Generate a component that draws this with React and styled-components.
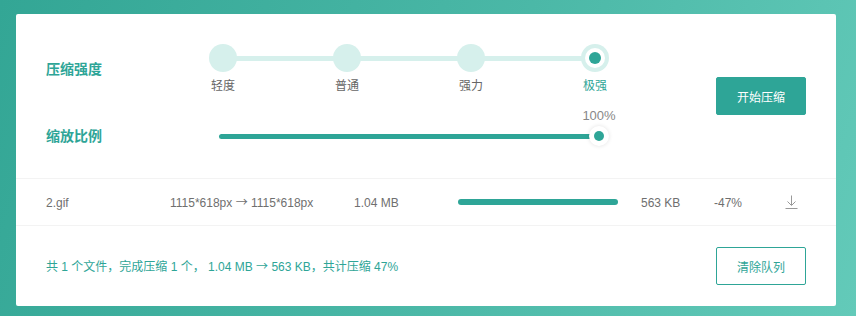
import React from "react";
import styled, { createGlobalStyle } from "styled-components";

const Global = createGlobalStyle`
  html, body { margin: 0; padding: 0; }
  body {
    font-family: "Liberation Sans", "Noto Sans CJK SC", sans-serif;
    width: 856px;
    height: 316px;
    overflow: hidden;
  }
`;

const TEAL = "#2ea597";
const LIGHT = "#d6f0ec";

const Page = styled.div`
  box-sizing: border-box;
  width: 856px;
  height: 316px;
  padding: 14px 20px 10px 16px;
  background: linear-gradient(110deg, #33a695 0%, #4bb8a7 55%, #63cab9 100%);
`;

const Card = styled.div`
  background: #fff;
  border-radius: 2px;
  height: 292px;
  display: flex;
  flex-direction: column;
`;

const Settings = styled.section`
  display: grid;
  grid-template-columns: 1fr auto;
  height: 165px;
  box-sizing: border-box;
  padding: 0 30px;
  border-bottom: 1px solid #f3f3f3;
`;

const Controls = styled.div`
  padding-top: 30px;
  display: flex;
  flex-direction: column;
`;

const Row = styled.div`
  display: flex;
  align-items: center;
  margin-top: ${(p) => p.$mt || 0}px;
`;

const Label = styled.div`
  width: 163px;
  flex: none;
  font-size: 14px;
  font-weight: bold;
  color: ${TEAL};
  line-height: 20px;
`;

const Steps = styled.div`
  position: relative;
  width: 400px;
  display: flex;
  justify-content: space-between;
  &::before {
    content: "";
    position: absolute;
    left: 14px;
    right: 14px;
    top: 12px;
    height: 5px;
    background: ${LIGHT};
  }
`;

const Step = styled.div`
  position: relative;
  width: 28px;
  display: flex;
  flex-direction: column;
  align-items: center;
`;

const Dot = styled.div`
  width: 28px;
  height: 28px;
  border-radius: 50%;
  background: ${LIGHT};
  display: flex;
  align-items: center;
  justify-content: center;
`;

const DotInner = styled.div`
  width: 20px;
  height: 20px;
  border-radius: 50%;
  background: #fff;
  display: flex;
  align-items: center;
  justify-content: center;
  &::after {
    content: "";
    width: 12px;
    height: 12px;
    border-radius: 50%;
    background: ${TEAL};
  }
`;

const StepText = styled.div`
  margin-top: 6px;
  font-size: 12px;
  line-height: 16px;
  white-space: nowrap;
  color: ${(p) => (p.$active ? TEAL : "#666")};
`;

const Slider = styled.div`
  position: relative;
  margin-left: 10px;
  width: 390px;
  height: 20px;
  display: flex;
  align-items: center;
`;

const Track = styled.div`
  width: 380px;
  height: 5px;
  border-radius: 3px;
  background: ${TEAL};
`;

const Thumb = styled.div`
  position: absolute;
  right: 0;
  top: 0;
  width: 20px;
  height: 20px;
  border-radius: 50%;
  background: #fff;
  box-shadow: 0 0 4px rgba(0, 0, 0, 0.12);
  display: flex;
  align-items: center;
  justify-content: center;
  &::after {
    content: "";
    width: 10px;
    height: 10px;
    border-radius: 50%;
    background: ${TEAL};
  }
`;

const Value = styled.div`
  position: absolute;
  right: -8px;
  top: -18px;
  width: 36px;
  text-align: center;
  font-size: 13px;
  line-height: 16px;
  color: #888;
`;

const Button = styled.button`
  box-sizing: border-box;
  align-self: center;
  width: 90px;
  height: 38px;
  border-radius: 2px;
  font-family: inherit;
  font-size: 12px;
  cursor: pointer;
  border: 1px solid ${TEAL};
  background: ${(p) => (p.$outline ? "#fff" : TEAL)};
  color: ${(p) => (p.$outline ? TEAL : "#fff")};
  padding: 0;
`;

const FileRow = styled.div`
  display: grid;
  grid-template-columns: 124px 184px 104px 183px 73px 71px auto;
  align-items: center;
  height: 46px;
  padding: 0 30px;
  border-bottom: 1px solid #f3f3f3;
  font-size: 12px;
  line-height: 16px;
  color: #6f6f6f;
`;

const Cell = styled.div`
  white-space: nowrap;
  padding-top: 2px;
`;

const Arrow = styled.span`
  font-family: "Noto Sans CJK SC", sans-serif;
  line-height: 1;
`;

const Progress = styled.div`
  width: 160px;
  height: 6px;
  border-radius: 3px;
  background: ${TEAL};
`;

const Footer = styled.div`
  flex: 1;
  display: flex;
  align-items: center;
  justify-content: space-between;
  padding: 0 30px;
`;

const Summary = styled.div`
  font-size: 12px;
  line-height: 16px;
  color: ${TEAL};
  margin-top: 2px;
  white-space: nowrap;
`;

const DownloadIcon = () => (
  <svg width="14" height="14" viewBox="0 0 14 14" fill="none" stroke="#999" strokeWidth="1">
    <path d="M6.5 0.5v9.5" />
    <path d="M2.5 6.5l4 4 4-4" />
    <path d="M0.5 13.5h12" />
  </svg>
);

const levels = ["轻度", "普通", "强力", "极强"];

export default function App() {
  const active = 3;
  return (
    <>
      <Global />
      <Page>
        <Card>
          <Settings>
            <Controls>
              <Row>
                <Label>压缩强度</Label>
                <Steps>
                  {levels.map((l, i) => (
                    <Step key={l}>
                      <Dot>{i === active && <DotInner />}</Dot>
                      <StepText $active={i === active}>{l}</StepText>
                    </Step>
                  ))}
                </Steps>
              </Row>
              <Row $mt={32}>
                <Label>缩放比例</Label>
                <Slider>
                  <Track />
                  <Thumb />
                  <Value>100%</Value>
                </Slider>
              </Row>
            </Controls>
            <Button>开始压缩</Button>
          </Settings>
          <FileRow>
            <Cell>2.gif</Cell>
            <Cell>
              1115*618px <Arrow>→</Arrow> 1115*618px
            </Cell>
            <Cell>1.04 MB</Cell>
            <Progress />
            <Cell>563 KB</Cell>
            <Cell>-47%</Cell>
            <DownloadIcon />
          </FileRow>
          <Footer>
            <Summary>
              共 1 个文件，完成压缩 1 个， 1.04 MB <Arrow>→</Arrow> 563 KB，共计压缩 47%
            </Summary>
            <Button $outline>清除队列</Button>
          </Footer>
        </Card>
      </Page>
    </>
  );
}
